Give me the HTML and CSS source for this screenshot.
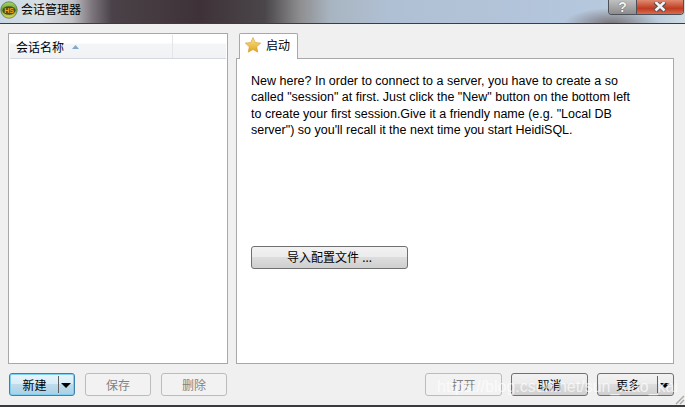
FILE: index.html
```html
<!DOCTYPE html>
<html lang="zh">
<head>
<meta charset="utf-8">
<title>会话管理器</title>
<link rel="stylesheet" href="styles.css">
</head>
<body>
<div class="window">
  <header class="titlebar">
    <svg class="app-icon" width="18" height="18" viewBox="0 0 18 18"><defs><linearGradient id="g" x1="0" y1="0" x2="0" y2="1"><stop offset="0" stop-color="#a8d860"/><stop offset=".45" stop-color="#6aa83a"/><stop offset="1" stop-color="#e8d850"/></linearGradient></defs><circle cx="9" cy="9" r="8.2" fill="url(#g)" stroke="#5a7a48" stroke-width=".8"/><ellipse cx="9" cy="9.5" rx="6.6" ry="4.2" fill="#4a4a28"/><text x="9" y="12.2" text-anchor="middle" class="app-icon-text">HS</text></svg>
    <span class="title">会话管理器</span>
    <div class="caption-btns">
      <div class="cap cap-help">?</div>
      <div class="cap cap-close">
        <svg width="14" height="10" viewBox="0 0 14 10"><path d="M2 0 L12 9 M12 0 L2 9" stroke="#4a5058" stroke-width="4.4"/><path d="M2.5 0 L11.5 8.5 M11.5 0 L2.5 8.5" stroke="#f4f4f4" stroke-width="2.6"/></svg>
      </div>
    </div>
  </header>
  <main class="content">
    <section class="left">
      <div class="list">
        <div class="list-head">
          <div class="col col-name">会话名称<svg class="sort" width="7" height="4" viewBox="0 0 7 4"><path d="M3.5 0 L7 4 H0 Z" fill="#7fa8cc"/></svg></div>
          <div class="col col-rest"></div>
        </div>
      </div>
      <div class="btn-row btn-row-left">
        <div class="btn btn-focus btn-split"><span class="btn-label">新建</span><span class="sep"></span><span class="arrow"></span></div>
        <div class="btn btn-disabled btn-small">保存</div>
        <div class="btn btn-disabled btn-small">删除</div>
      </div>
    </section>
    <section class="right">
      <div class="tabs">
        <div class="tab">
          <svg width="16" height="16" viewBox="0 0 16 16"><defs><linearGradient id="s" x1="0" y1="0" x2="0" y2="1"><stop offset="0" stop-color="#fbe88a"/><stop offset="1" stop-color="#e0a020"/></linearGradient></defs><path d="M8 .5 L10.3 5.5 L15.7 6.1 L11.7 9.8 L12.8 15.2 L8 12.5 L3.2 15.2 L4.3 9.8 L.3 6.1 L5.7 5.5 Z" fill="url(#s)" stroke="#d49a30" stroke-width=".6"/></svg>
          <span>启动</span>
        </div>
      </div>
      <div class="panel">
        <p class="intro">New here? In order to connect to a server, you have to create a so called "session" at first. Just click the "New" button on the bottom left to create your first session.Give it a friendly name (e.g. "Local DB server") so you'll recall it the next time you start HeidiSQL.</p>
        <div class="btn btn-import">导入配置文件 ...</div>
      </div>
      <div class="btn-row btn-row-right">
        <div class="btn btn-disabled btn-wide">打开</div>
        <div class="btn btn-wide">取消</div>
        <div class="btn btn-wide btn-split"><span class="btn-label">更多</span><span class="sep"></span><span class="arrow"></span></div>
      </div>
    </section>
  </main>
  <div class="watermark">https://blog.csdn.net/sun_xiao_kai</div>
  <svg class="grip" width="12" height="12" viewBox="0 0 12 12"><path d="M11 3 L3 11 M11 7 L7 11" stroke="#a8a8a8" stroke-width="1.4"/></svg>
</div>
</body>
</html>
```
FILE: styles.css
```css
* { box-sizing: border-box; }
html, body { margin: 0; padding: 0; }
body { width: 685px; height: 407px; overflow: hidden; font-family: "Noto Sans", "Noto Sans CJK SC", sans-serif; font-size: 12px; color: #000; background: #f0f0f0; }
.window { position: relative; width: 685px; height: 407px; display: flex; flex-direction: column; overflow: hidden; border-bottom: 2px solid #3a3a3e; }
.titlebar { position: relative; height: 24px; flex: none; display: flex; align-items: center; padding: 0 0 4px 0; gap: 3px; border-bottom: 1px solid #3c3c44;
  background: radial-gradient(ellipse 48px 16px at 612px 24px, rgba(110,100,100,.85), rgba(110,100,100,0) 100%), linear-gradient(90deg, #c8d8e4 0, #d8dfe4 40px, #c0c0c4 72px, #7c767c 92px, #4a4248 112px, #3e3238 200px, #4a464a 265px, #8e8e90 300px, #a8b4c0 330px, #b0c0d4 390px, #b4c6dc 570px, #bccddc 660px, #d0dce4 685px); }
.app-icon { flex: none; }
.app-icon-text { font: bold 7px "Liberation Sans", sans-serif; fill: #f0a818; }
.title { font-size: 12px; line-height: 16px; }
.caption-btns { position: absolute; top: 0; right: 1px; display: flex; height: 15px; border: 1px solid #4c5058; border-top: 0; border-radius: 0 0 4px 4px; overflow: hidden; }
.cap { display: flex; align-items: center; justify-content: center; height: 14px; }
.cap-help { width: 28px; border-right: 1px solid #4c5058; background: linear-gradient(#c0c0c0, #8c8c8c); color: #f4f4f4; font: bold 14px/14px "Liberation Sans", sans-serif; text-shadow: 0 0 1px #333; }
.cap-close { width: 46px; background: linear-gradient(#e08a70, #c03c20 60%, #d86a50); }
.content { flex: 1; display: flex; gap: 8px; padding: 9px 11px 9px 8px; min-height: 0; }
.left { width: 220px; flex: none; display: flex; flex-direction: column; }
.right { flex: 1; display: flex; flex-direction: column; min-width: 0; }
.list { flex: 1; background: #fff; border: 1px solid #a8a8a8; padding: 1px 1px 0; }
.list-head { height: 24px; display: flex; border-bottom: 1px solid #d5d8df; background: linear-gradient(#fff 0, #fff 8px, #f3f5f7 9px, #f0f2f5 100%); }
.col { height: 100%; display: flex; align-items: center; }
.col-name { width: 163px; padding-left: 6px; gap: 8px; border-right: 1px solid #e3e5e8; }
.col-rest { flex: 1; }
.sort { margin-top: 1px; }
.btn-row { height: 23px; margin-top: 9px; display: flex; flex: none; }
.btn-row-left { gap: 10px; padding-left: 1px; }
.btn-row-right { justify-content: flex-end; gap: 9px; }
.btn { display: flex; align-items: center; justify-content: center; height: 23px; border: 1px solid #707070; border-radius: 3px; background: linear-gradient(#f2f2f2, #ebebeb 48%, #dddddd 50%, #cfcfcf); font-size: 12px; }
.btn-focus { border-color: #3c7fb1; box-shadow: inset 0 0 0 1px #7fd0f0; background: linear-gradient(#e8f5fc, #d8ecf8 48%, #bfdcec 50%, #a9cfe4); }
.btn-disabled { border-color: #bcbcbc; background: #f2f2f2; color: #838383; }
.btn-small { width: 66px; }
.btn-wide { width: 77px; }
.btn-split { width: 66px; position: relative; padding-right: 15px; }
.btn-wide.btn-split { width: 77px; }
.btn-split .sep { position: absolute; right: 15px; top: 2px; bottom: 2px; width: 1px; background: #606060; }
.btn-split .arrow { position: absolute; right: 3px; top: 9px; width: 0; height: 0; border-left: 5px solid transparent; border-right: 5px solid transparent; border-top: 5px solid #000; }
.tabs { height: 25px; flex: none; padding-left: 3px; display: flex; position: relative; z-index: 1; }
.tab { width: 59px; height: 26px; display: flex; align-items: center; gap: 5px; padding: 0 0 3px 5px; background: #fff; border: 1px solid #a8a8a8; border-bottom: 0; border-radius: 2px 2px 0 0; }
.panel { flex: 1; background: #fff; border: 1px solid #a8a8a8; padding: 14px 14px 0; display: flex; flex-direction: column; }
.intro { margin: 0; font-family: "Liberation Sans", sans-serif; font-size: 12.5px; line-height: 16.4px; width: 385px; }
.btn-import { width: 157px; flex: none; margin-top: 107px; }
.watermark { position: absolute; left: 437px; top: 377px; font: 16px/20px "Liberation Sans", sans-serif; color: rgba(255,255,255,.7); white-space: nowrap; pointer-events: none; }
.grip { position: absolute; right: 0; bottom: 0; }
```
